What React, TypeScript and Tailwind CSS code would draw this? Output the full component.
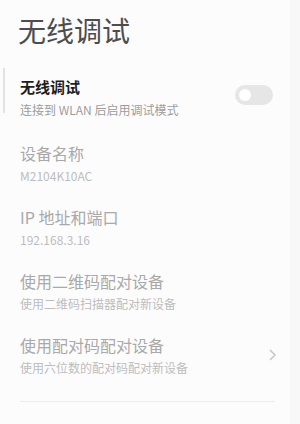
import React from "react";

const font = { fontFamily: '"Noto Sans CJK SC", "Noto Sans", sans-serif' };

interface ItemProps {
  title: string;
  sub: string;
  chevron?: boolean;
}

const InfoItem = ({ title, sub, chevron }: ItemProps) => {
  return (
    <div className="flex items-center pl-5 pr-[13px]">
      <div className="flex-1">
        <div className="text-[16px] leading-[22px] text-[#a9a9a9]">{title}</div>
        <div className="mt-[3px] text-[12px] leading-[17px] text-[#bdbdbd]">{sub}</div>
      </div>
      {chevron && (
        <svg width="10" height="14" viewBox="0 0 10 14">
          <path d="M3 2 L8 7 L3 12" fill="none" stroke="#c8c8c8" strokeWidth="1.6" />
        </svg>
      )}
    </div>
  );
};

const App = () => {
  return (
    <div className="flex w-[300px] h-[424px] bg-[#fcfcfc] overflow-hidden" style={font}>
      <div className="w-[290px] flex flex-col">
        <h1 className="pl-[18px] pt-[11px] text-[28px] leading-[38px] font-normal text-[#4d4d4d]">
          无线调试
        </h1>

        <div className="relative mt-[27px] flex items-center pl-5 pr-[17px]">
          <div className="absolute left-[3px] top-[-8px] h-[45px] w-[2px] bg-[#e2e2e2]" />
          <div className="flex-1">
            <div className="text-[15px] leading-[22px] font-bold text-[#1e1e1e]">无线调试</div>
            <div className="mt-[3px] text-[12px] leading-[17px] text-[#9c9c9c]">
              连接到 WLAN 后启用调试模式
            </div>
          </div>
          <div className="mb-[4px] flex items-center w-[38px] h-[20px] rounded-full bg-[#e6e6e6] pl-[4px]">
            <div className="w-[12px] h-[12px] rounded-full bg-white" />
          </div>
        </div>

        <div className="mt-[24px] flex flex-col gap-[22px]">
          <InfoItem title="设备名称" sub="M2104K10AC" />
          <InfoItem title="IP 地址和端口" sub="192.168.3.16" />
          <InfoItem title="使用二维码配对设备" sub="使用二维码扫描器配对新设备" />
          <InfoItem title="使用配对码配对设备" sub="使用六位数的配对码配对新设备" chevron />
        </div>

        <div className="mt-[25px] ml-5 mr-[15px] h-px bg-[#ececec]" />
      </div>
      <div className="flex-1 bg-[#f8f8f8]" />
    </div>
  );
};

export default App;
